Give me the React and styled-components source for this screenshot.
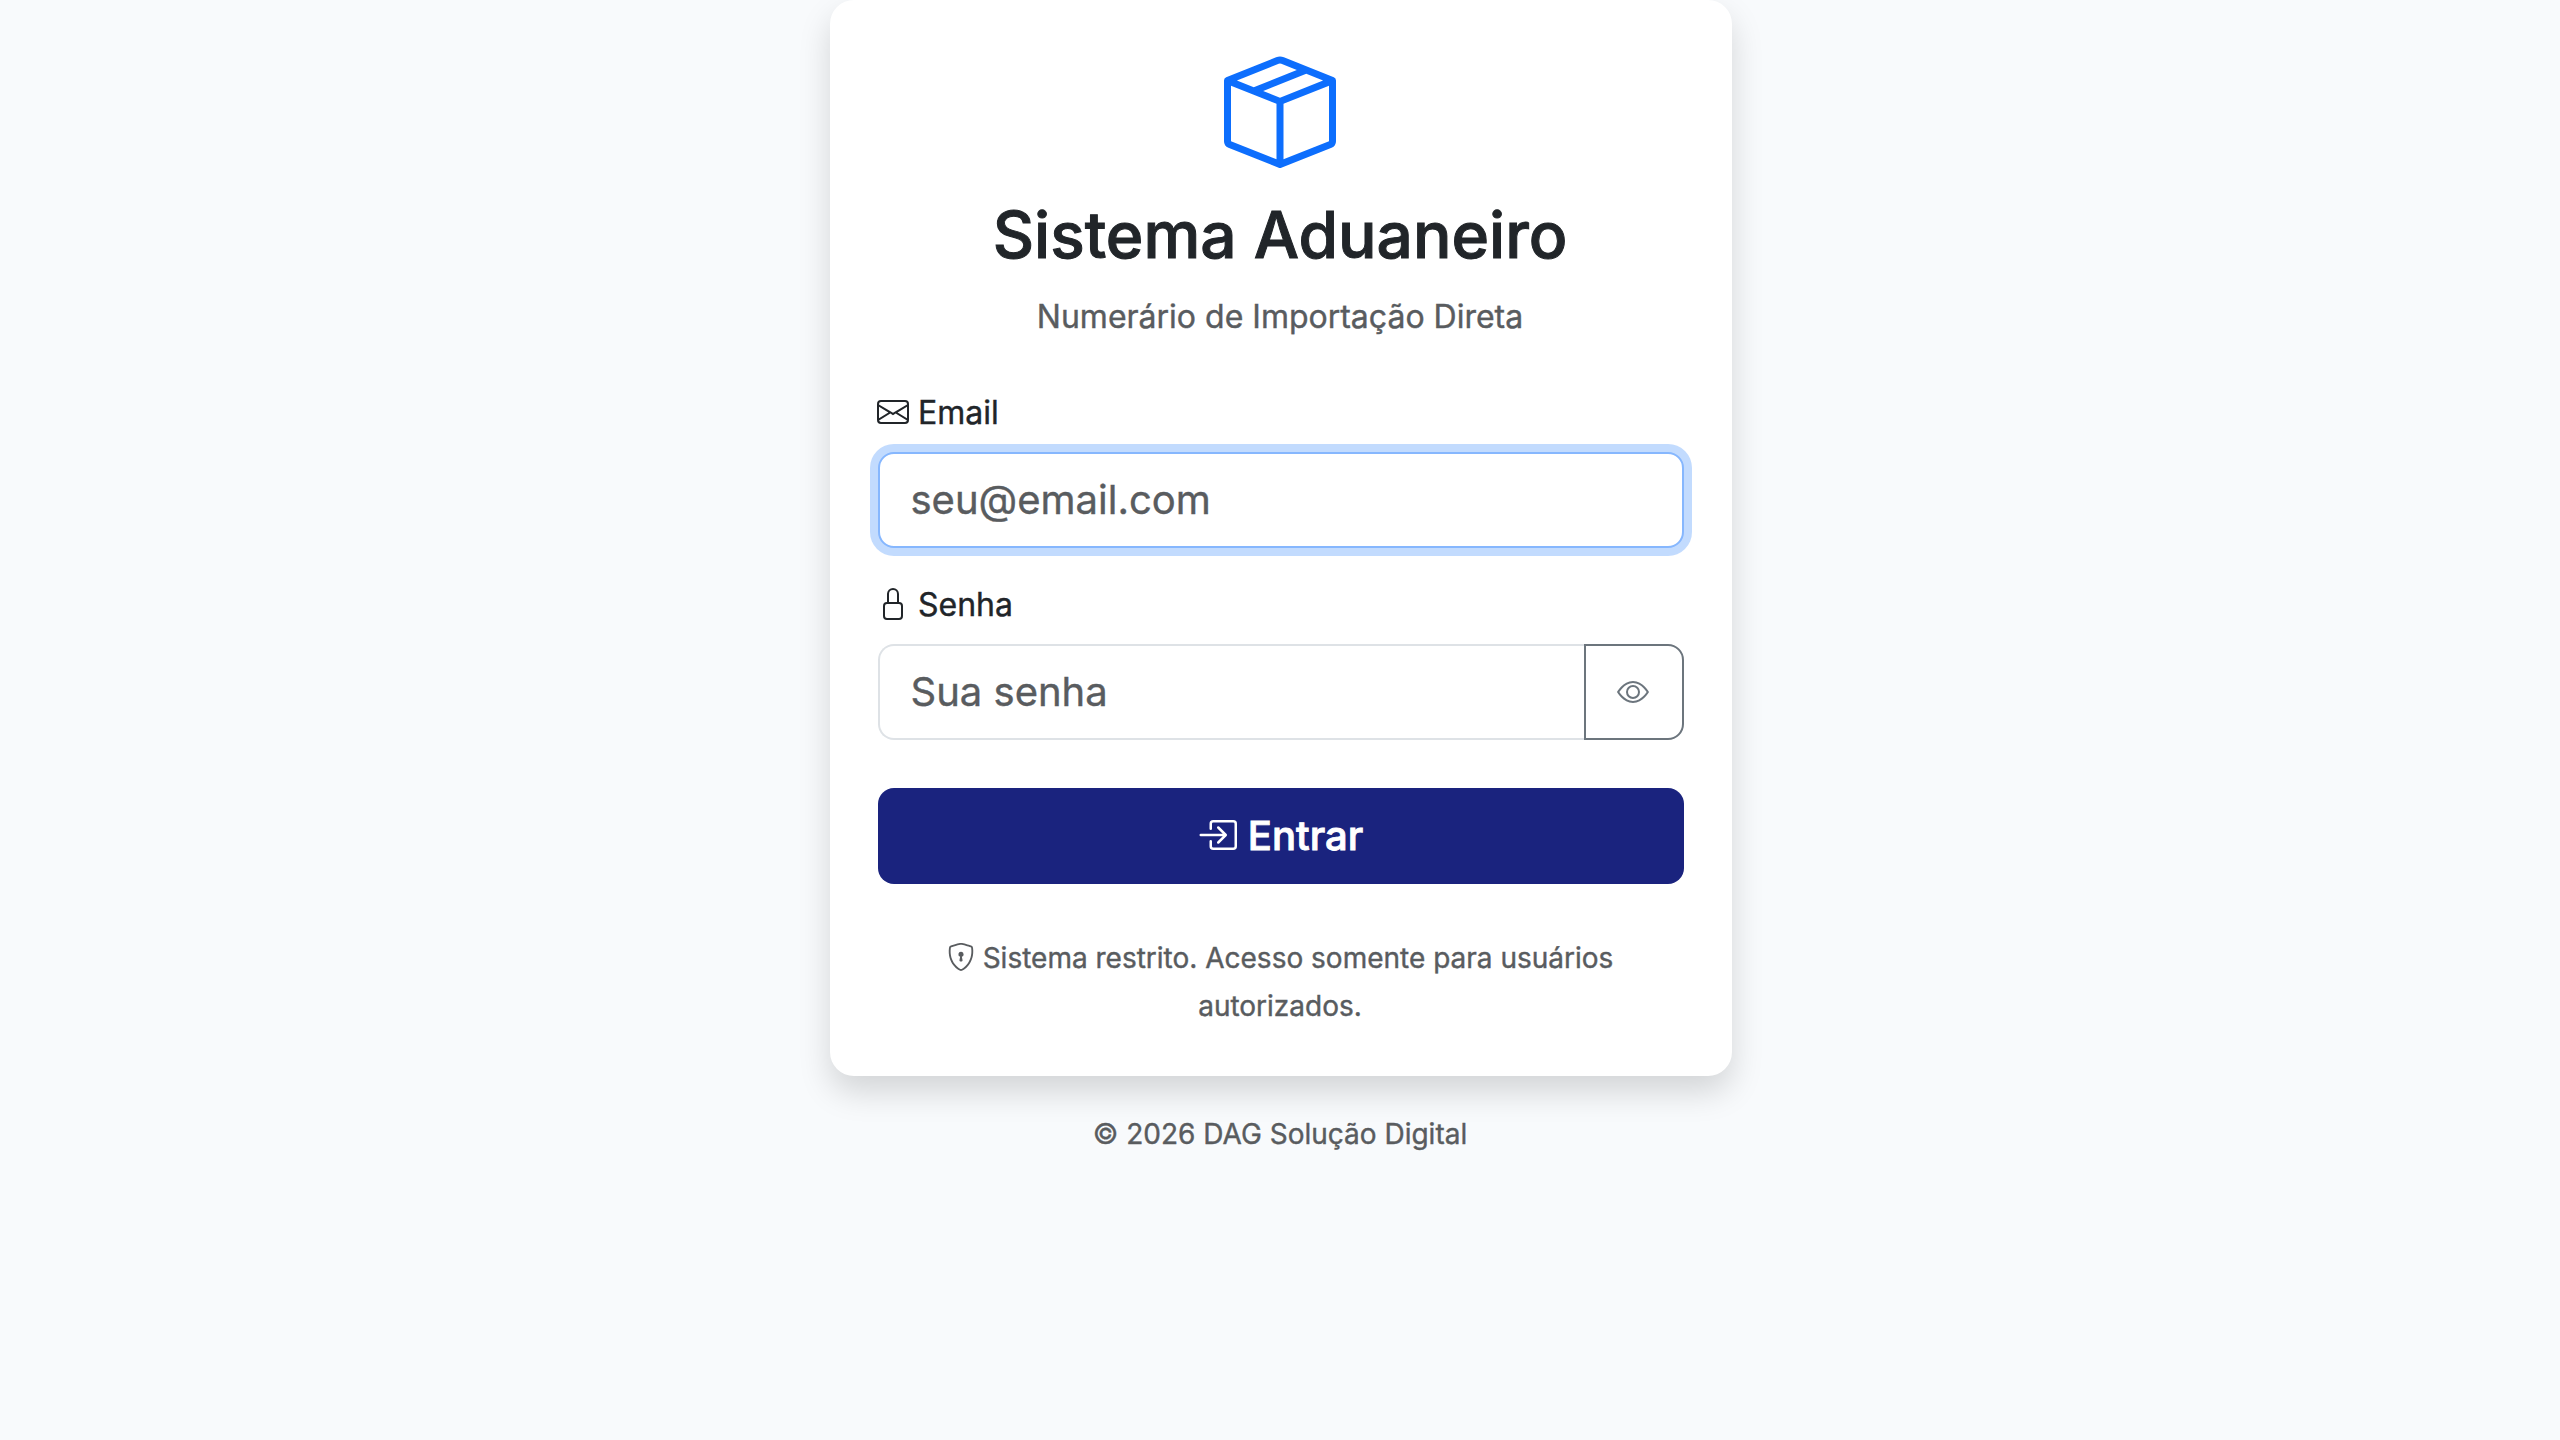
import React, { useState } from 'react';
import styled, { createGlobalStyle, css } from 'styled-components';
import {
  BsBoxSeam,
  BsEnvelope,
  BsLock,
  BsEye,
  BsEyeSlash,
  BsBoxArrowInRight,
  BsShieldLock,
} from 'react-icons/bs';

const GlobalStyle = createGlobalStyle`
  *, *::before, *::after {
    box-sizing: border-box;
  }
  body {
    margin: 0;
    background: #f8fafc;
    color: #212529;
    font-family: Inter, 'Liberation Sans', sans-serif;
    font-size: 32px;
    line-height: 1.7;
    -webkit-font-smoothing: antialiased;
    -webkit-text-stroke: 0.4px;
  }
`;

const Page = styled.main`
  min-height: 100vh;
  display: flex;
  flex-direction: column;
  align-items: center;
  padding-left: 1px;
  overflow: hidden;
`;

const Card = styled.section`
  width: 902px;
  height: 1076px;
  padding: 56px 48px 0;
  background: #fff;
  border-radius: 24px;
  box-shadow: 0 16px 32px rgba(0, 0, 0, 0.15);
`;

const Header = styled.header`
  display: flex;
  flex-direction: column;
  align-items: center;
  height: 333px;
  padding-right: 1px;
`;

const Logo = styled(BsBoxSeam)`
  width: 112px;
  height: 112px;
  color: #0d6efd;
`;

const Title = styled.h1`
  margin: 29px 0 16px;
  font-size: 64px;
  font-weight: 500;
  line-height: 1.2;
  white-space: nowrap;
  -webkit-text-stroke: 1px;
`;

const Subtitle = styled.p`
  margin: 0;
  color: #595c5f;
`;

const Form = styled.form`
  display: flex;
  flex-direction: column;
`;

const Field = styled.div`
  margin-bottom: ${({ $last }) => ($last ? '48px' : '33px')};
`;

const Label = styled.label`
  display: flex;
  align-items: center;
  gap: 9.5px;
  margin-bottom: 15px;
  line-height: 48px;
  font-weight: 400;

  svg {
    width: 32px;
    height: 32px;
    margin: -1px 0 1px -1px;
  }
`;

const InputGroup = styled.div`
  display: flex;
`;

const Input = styled.input`
  flex: 1;
  min-width: 0;
  height: 96px;
  padding: 15px 32px 17px 31px;
  border: 2px solid #dee2e6;
  border-radius: 16px;
  background: #fff;
  color: #212529;
  font-family: inherit;
  font-size: 40px;
  line-height: 1.5;
  outline: none;

  &::placeholder {
    color: #595c5f;
    opacity: 1;
  }

  ${({ $highlight }) =>
    $highlight &&
    css`
      border-color: #86b7fe;
      box-shadow: 0 0 0 8px rgba(13, 110, 253, 0.25);
    `}

  ${({ $grouped }) =>
    $grouped &&
    css`
      border-right: none;
      border-top-right-radius: 0;
      border-bottom-right-radius: 0;
    `}
`;

const ToggleBtn = styled.button`
  display: flex;
  align-items: center;
  justify-content: center;
  width: 100px;
  height: 96px;
  padding: 0 2px 0 0;
  border: 2px solid #6c757d;
  border-radius: 0 16px 16px 0;
  background: #fff;
  color: #6c757d;
  font-size: 32px;
  cursor: pointer;
`;

const SubmitBtn = styled.button`
  display: flex;
  align-items: center;
  justify-content: center;
  gap: 11px;
  height: 96px;
  padding: 0 1px 2px 0;
  border: none;
  border-radius: 16px;
  background: #1a237e;
  color: #fff;
  font-family: inherit;
  font-size: 40px;
  font-weight: 500;
  -webkit-text-stroke: 0.9px;
  cursor: pointer;

  svg {
    margin-top: -1px;
  }
`;

const Notice = styled.p`
  margin: 51px 0 0;
  padding: 0 33px 0 32px;
  color: #595c5f;
  font-size: 28px;
  text-align: center;

  svg {
    margin-right: 8px;
    vertical-align: -2.5px;
  }
`;

const Footer = styled.footer`
  margin: 35px 1px 0 0;
  color: #595c5f;
  font-size: 28px;
`;

function App() {
  const [email, setEmail] = useState('');
  const [senha, setSenha] = useState('');
  const [showSenha, setShowSenha] = useState(false);

  return (
    <>
      <GlobalStyle />
      <Page>
        <Card>
          <Header>
            <Logo />
            <Title>Sistema Aduaneiro</Title>
            <Subtitle>Numerário de Importação Direta</Subtitle>
          </Header>
          <Form onSubmit={e => e.preventDefault()}>
            <Field>
              <Label htmlFor="email"><BsEnvelope />Email</Label>
              <InputGroup>
                <Input
                  id="email"
                  type="email"
                  placeholder="seu@email.com"
                  value={email}
                  onChange={e => setEmail(e.target.value)}
                  $highlight
                />
              </InputGroup>
            </Field>
            <Field $last>
              <Label htmlFor="senha"><BsLock />Senha</Label>
              <InputGroup>
                <Input
                  id="senha"
                  type={showSenha ? 'text' : 'password'}
                  placeholder="Sua senha"
                  value={senha}
                  onChange={e => setSenha(e.target.value)}
                  $grouped
                />
                <ToggleBtn type="button" onClick={() => setShowSenha(!showSenha)}>
                  {showSenha ? <BsEyeSlash /> : <BsEye />}
                </ToggleBtn>
              </InputGroup>
            </Field>
            <SubmitBtn type="submit"><BsBoxArrowInRight />Entrar</SubmitBtn>
          </Form>
          <Notice>
            <BsShieldLock />
            Sistema restrito. Acesso somente para usuários autorizados.
          </Notice>
        </Card>
        <Footer>© 2026 DAG Solução Digital</Footer>
      </Page>
    </>
  );
}

export default App;
